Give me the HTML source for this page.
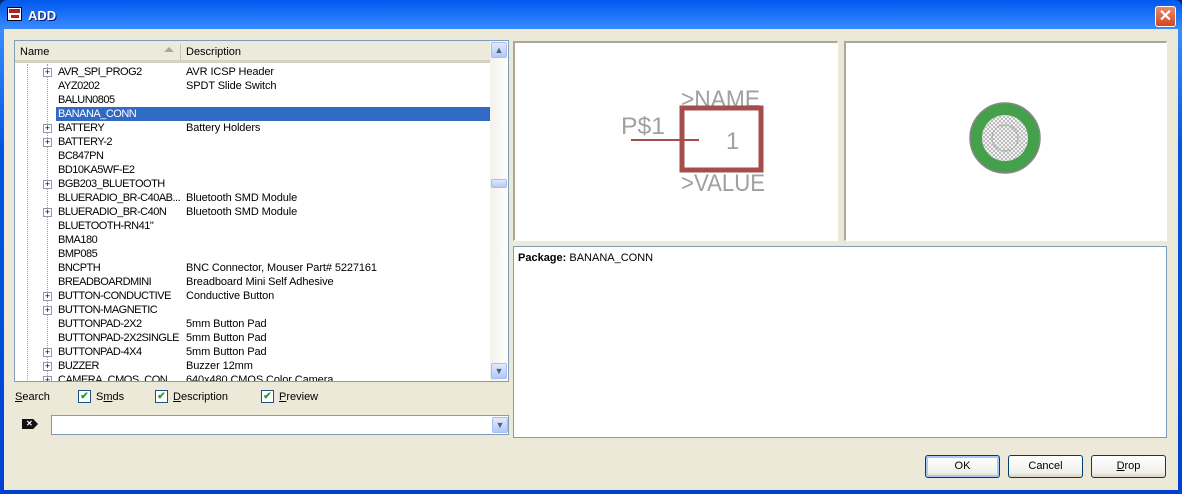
<!DOCTYPE html>
<html><head><meta charset="utf-8"><style>
*{box-sizing:border-box;margin:0;padding:0}
body{width:1182px;height:494px;overflow:hidden;font-family:Tahoma,"Liberation Sans",sans-serif;font-size:11px;background:#0a246a;position:relative}
.win{position:absolute;left:0;top:0;width:1182px;height:494px;background:linear-gradient(#0058ee,#3a8cff 6%,#0454e4 30%,#0050e0 60%,#0040d0);border-radius:7px 7px 0 0}
.title{position:absolute;left:28px;top:8px;color:#fff;font-weight:bold;font-size:13px;text-shadow:1px 1px #0a1a60}
.client{position:absolute;left:4px;top:29px;width:1174px;height:461px;background:#ece9d8}
.abs{position:absolute}
.list{left:14px;top:40px;width:495px;height:342px;border:1px solid #7f9db9;background:#fff;overflow:hidden}
.hdr{position:absolute;left:0;top:0;width:475px;height:22px;background:#ebeadb;border-bottom:3px solid #d6d2c2}
.hdr span{position:absolute;top:5px}
.row{position:absolute;left:0;height:14px;line-height:14px;width:475px;white-space:nowrap}
.row .n{position:absolute;left:43px;letter-spacing:-0.5px}
.row .d{position:absolute;left:171px;letter-spacing:-0.1px}
.sel{background:#316ac5;color:#fff}
.plus{position:absolute;left:28px;top:3px;width:9px;height:9px;border:1px solid #8c9bb4;background:#fff;font-size:9px;line-height:7px;text-align:center;color:#000}
.scroll{position:absolute;left:475px;top:0;width:18px;height:340px;background:linear-gradient(90deg,#f3f1ec,#fefefe)}
.sbtn{position:absolute;left:1px;width:16px;height:16px;background:linear-gradient(#e1eafe,#b4c8f6);border:1px solid #a6bdf0;border-radius:2px;color:#4d6185;font-size:9px;text-align:center;line-height:14px}
.pane{background:#fff;border-top:2px solid #aca899;border-left:2px solid #aca899;border-right:1px solid #fff;border-bottom:1px solid #fff}
.cb{position:absolute;top:390px;width:13px;height:13px;border:1px solid #1c5180;background:#fff;color:#21a121;font-size:10px;line-height:11px;text-align:center;font-weight:bold}
.lbl{position:absolute;top:391px}
.btn{position:absolute;top:455px;width:75px;height:23px;border:1px solid #003c74;border-radius:3px;background:linear-gradient(#fff,#f0f0ea 80%,#d6d0c5);text-align:center;line-height:21px}
</style></head><body>
<div class="win">
<div class="abs" style="left:7px;top:7px;width:15px;height:14px;background:#fff;border:1px solid #000"><div class="abs" style="left:1px;top:1px;width:11px;height:4px;background:#b02020"></div><div class="abs" style="left:3px;top:7px;width:8px;height:3px;background:#b02020"></div></div>
<div class="title">ADD</div>
<div class="abs" style="left:1155px;top:6px;width:21px;height:21px;background:linear-gradient(#e88a6c,#d2461e);border:1px solid #fff;border-radius:3px;color:#fff;font-size:16px;font-weight:bold;text-align:center;line-height:19px">✕</div>
</div>
<div class="client"></div>

<div class="abs list">
 <div class="hdr"><span style="left:5px">Name</span><span style="left:149px;top:6px;width:0;height:0;border-left:5px solid transparent;border-right:5px solid transparent;border-bottom:5px solid #aca899"></span><span style="left:165px;top:3px;width:1px;height:16px;background:#c7c5b2"></span><span style="left:171px">Description</span></div>
 <div class="abs" style="left:12px;top:23px;height:320px;border-left:1px dotted #a0a0a0"></div>
 <div class="abs" style="left:32px;top:23px;height:320px;border-left:1px dotted #a0a0a0"></div>
 <div class="row" style="top:24px"><div class="plus">+</div><span class="n">AVR_SPI_PROG2</span><span class="d">AVR ICSP Header</span></div>
 <div class="row" style="top:38px"><span class="n">AYZ0202</span><span class="d">SPDT Slide Switch</span></div>
 <div class="row" style="top:52px"><span class="n">BALUN0805</span></div>
 <div class="row" style="top:66px"><div class="sel abs" style="left:41px;top:0;width:434px;height:14px"></div><span class="n" style="color:#fff">BANANA_CONN</span></div>
 <div class="row" style="top:80px"><div class="plus">+</div><span class="n">BATTERY</span><span class="d">Battery Holders</span></div>
 <div class="row" style="top:94px"><div class="plus">+</div><span class="n">BATTERY-2</span></div>
 <div class="row" style="top:108px"><span class="n">BC847PN</span></div>
 <div class="row" style="top:122px"><span class="n">BD10KA5WF-E2</span></div>
 <div class="row" style="top:136px"><div class="plus">+</div><span class="n">BGB203_BLUETOOTH</span></div>
 <div class="row" style="top:150px"><span class="n">BLUERADIO_BR-C40AB...</span><span class="d">Bluetooth SMD Module</span></div>
 <div class="row" style="top:164px"><div class="plus">+</div><span class="n">BLUERADIO_BR-C40N</span><span class="d">Bluetooth SMD Module</span></div>
 <div class="row" style="top:178px"><span class="n">BLUETOOTH-RN41"</span></div>
 <div class="row" style="top:192px"><span class="n">BMA180</span></div>
 <div class="row" style="top:206px"><span class="n">BMP085</span></div>
 <div class="row" style="top:220px"><span class="n">BNCPTH</span><span class="d">BNC Connector, Mouser Part# 5227161</span></div>
 <div class="row" style="top:234px"><span class="n">BREADBOARDMINI</span><span class="d">Breadboard Mini Self Adhesive</span></div>
 <div class="row" style="top:248px"><div class="plus">+</div><span class="n">BUTTON-CONDUCTIVE</span><span class="d">Conductive Button</span></div>
 <div class="row" style="top:262px"><div class="plus">+</div><span class="n">BUTTON-MAGNETIC</span></div>
 <div class="row" style="top:276px"><span class="n">BUTTONPAD-2X2</span><span class="d">5mm Button Pad</span></div>
 <div class="row" style="top:290px"><span class="n">BUTTONPAD-2X2SINGLE</span><span class="d">5mm Button Pad</span></div>
 <div class="row" style="top:304px"><div class="plus">+</div><span class="n">BUTTONPAD-4X4</span><span class="d">5mm Button Pad</span></div>
 <div class="row" style="top:318px"><div class="plus">+</div><span class="n">BUZZER</span><span class="d">Buzzer 12mm</span></div>
 <div class="row" style="top:332px"><div class="plus">+</div><span class="n">CAMERA_CMOS_CON...</span><span class="d">640x480 CMOS Color Camera</span></div>
 <div class="scroll"><div class="sbtn" style="top:1px">▲</div><div class="sbtn" style="top:138px;height:9px"></div><div class="sbtn" style="top:322px">▼</div></div>
</div>

<div class="abs" style="left:15px;top:391px"><u>S</u>earch</div>
<div class="cb" style="left:78px">✔</div><div class="lbl" style="left:96px">S<u>m</u>ds</div>
<div class="cb" style="left:155px">✔</div><div class="lbl" style="left:173px"><u>D</u>escription</div>
<div class="cb" style="left:261px">✔</div><div class="lbl" style="left:279px"><u>P</u>review</div>
<div class="abs" style="left:22px;top:419px;width:16px;height:10px;background:#111;clip-path:polygon(0 0,70% 0,100% 50%,70% 100%,0 100%)"><div class="abs" style="left:4px;top:1px;color:#fff;font-size:8px;line-height:8px;font-weight:bold">✕</div></div>
<div class="abs" style="left:51px;top:415px;width:458px;height:20px;background:#fff;border:1px solid #7f9db9"><div class="sbtn" style="left:440px;top:1px;height:16px">▼</div></div>

<div class="abs pane" style="left:513px;top:41px;width:325px;height:200px"></div>
<div class="abs pane" style="left:844px;top:41px;width:323px;height:200px"></div>
<svg class="abs" style="left:513px;top:41px" width="325" height="200">
<g fill="#a0a0a0" font-family="Liberation Sans,sans-serif" font-size="24" textLength="80">
<text x="168" y="66" textLength="79" lengthAdjust="spacingAndGlyphs">&gt;NAME</text><text x="108" y="93" textLength="44" lengthAdjust="spacingAndGlyphs">P$1</text><text x="213" y="108">1</text><text x="168" y="150" textLength="84" lengthAdjust="spacingAndGlyphs">&gt;VALUE</text></g>
<line x1="118" y1="99" x2="186" y2="99" stroke="#a54d4d" stroke-width="2"/>
<rect x="169" y="67" width="79" height="62" fill="none" stroke="#a54d4d" stroke-width="5"/>
</svg>
<svg class="abs" style="left:844px;top:41px" width="323" height="200">
<defs><pattern id="h" width="4" height="4" patternUnits="userSpaceOnUse"><path d="M0 0L4 4M4 0L0 4" stroke="#b0b0b0" stroke-width="0.8"/></pattern></defs>
<circle cx="161" cy="97" r="35" fill="#44a04a" stroke="#888" stroke-width="1.5"/>
<circle cx="161" cy="97" r="23" fill="#fff"/><circle cx="161" cy="97" r="23" fill="url(#h)"/>
<circle cx="161" cy="97" r="13" fill="none" stroke="#aaa"/>
</svg>
<div class="abs" style="left:513px;top:246px;width:654px;height:192px;background:#fff;border:1px solid #7f9db9;padding:5px 4px"><b>Package:</b> BANANA_CONN</div>

<div class="btn" style="left:925px;border-color:#003c74;box-shadow:inset 0 0 0 2px #a8c8f8">OK</div>
<div class="btn" style="left:1008px">Cancel</div>
<div class="btn" style="left:1091px"><u>D</u>rop</div>
</body></html>
